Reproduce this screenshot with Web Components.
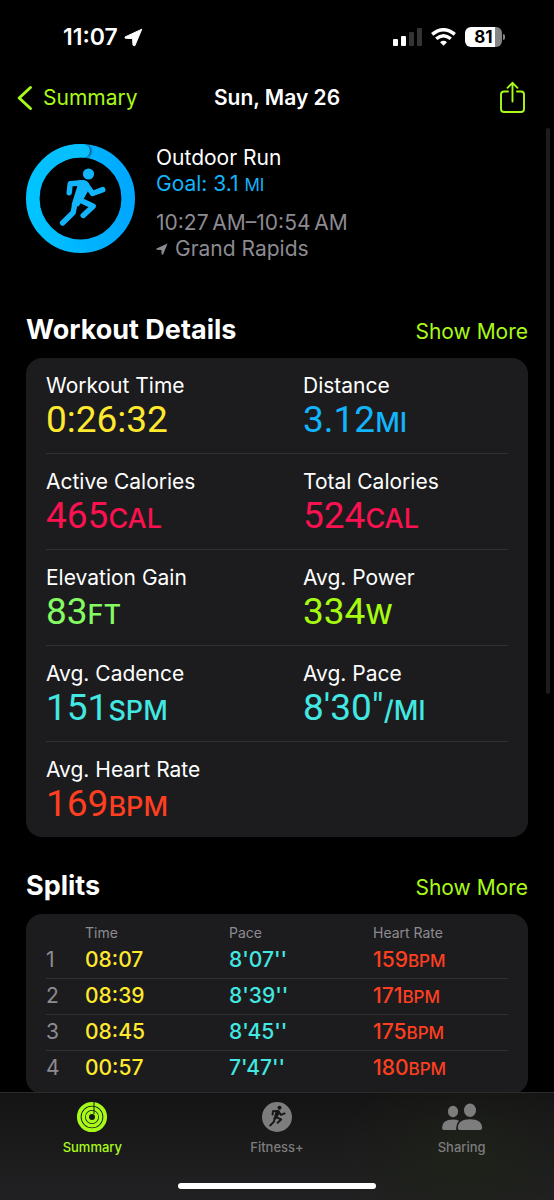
<!DOCTYPE html>
<html lang="en">
<head>
<meta charset="utf-8">
<meta name="viewport" content="width=device-width, initial-scale=1">
<title>Workout</title>
<style>
  :root {
    --accent: #a8fa18;
    --muted: #8c8b91;
    --card: #1c1c1e;
    --line: #303032;
    --blue: #12b4fb;
    --yellow: #ffe92e;
    --pink: #fa1150;
    --green: #84fb62;
    --lime: #a6fb10;
    --teal: #42e8e1;
    --red: #ff3f20;
    --numbers: Roboto, "Liberation Sans", sans-serif;
    --text: Inter, "Liberation Sans", sans-serif;
  }
  body {
    margin: 0;
    background: #000;
    color: #fff;
    font: 21px/26px var(--text);
  }
  small {
    font-size: 17px;
    line-height: 1;
  }
</style>
</head>
<body>
<workout-app>
  <status-bar slot="top" time="11:07" battery="81"></status-bar>
  <nav-header slot="top" back="Summary">Sun, May 26</nav-header>

  <workout-hero>
    <span slot="title">Outdoor Run</span>
    <span slot="goal">Goal: 3.1 <small>MI</small></span>
    <span slot="time">10:27&#8201;AM–10:54&#8201;AM</span>
    <span slot="place">Grand Rapids</span>
  </workout-hero>

  <detail-section heading="Workout Details">
    <metric-row>
      <metric-item label="Workout Time" value="0:26:32" color="yellow"></metric-item>
      <metric-item label="Distance" value="3.12" unit="MI" color="blue"></metric-item>
    </metric-row>
    <metric-row>
      <metric-item label="Active Calories" value="465" unit="CAL" color="pink"></metric-item>
      <metric-item label="Total Calories" value="524" unit="CAL" color="pink"></metric-item>
    </metric-row>
    <metric-row>
      <metric-item label="Elevation Gain" value="83" unit="FT" color="green"></metric-item>
      <metric-item label="Avg. Power" value="334" unit="W" color="lime"></metric-item>
    </metric-row>
    <metric-row>
      <metric-item label="Avg. Cadence" value="151" unit="SPM" color="teal"></metric-item>
      <metric-item label="Avg. Pace" value="8'30&quot;" unit="/MI" color="teal"></metric-item>
    </metric-row>
    <metric-row>
      <metric-item label="Avg. Heart Rate" value="169" unit="BPM" color="red"></metric-item>
    </metric-row>
  </detail-section>

  <detail-section heading="Splits">
    <splits-table></splits-table>
  </detail-section>

  <tab-bar slot="bottom">
    <tab-item icon="rings" label="Summary" active></tab-item>
    <tab-item icon="fitness" label="Fitness+"></tab-item>
    <tab-item icon="people" label="Sharing"></tab-item>
  </tab-bar>
</workout-app>

<script>
/**
 * Attach an open shadow root filled with the given markup
 * @param {HTMLElement} host
 * @param {string} html
 * @returns {ShadowRoot}
 */
const render = (host, html) => {
  const template = document.createElement('template');
  template.innerHTML = html;
  const root = host.attachShadow({mode: 'open'});
  root.appendChild(template.content.cloneNode(true));
  return root;
};

// Running figure, shared by the goal ring and the Fitness+ tab
const runner = `
  <circle cx="62.5" cy="30" r="5.6"/>
  <path d="M52 36.2H58.5Q61.5 36.5 63 39.5L64 43.5L58.5 53.5L52.5 62.5L45.5 61L51.2 42.5Z"/>
  <g fill="none" stroke="currentColor" stroke-width="5.4" stroke-linecap="round" stroke-linejoin="round">
    <path d="M57 38.8L44.2 39.8L43.2 48.8"/>
    <path d="M60.5 41L66.5 49.5L76.8 45.6"/>
    <path d="M48.8 60L47.2 68.5L36.6 79"/>
    <path d="M56 57L67.2 62.3L57.2 71.5"/>
  </g>`;

/**
 * @class WorkoutApp
 */
class WorkoutApp extends HTMLElement {
  /**
   * @function constructor
   */
  constructor () {
    super();
    render(this, `
      <style>
        :host { display: flex; flex-direction: column; height: 100vh; overflow: hidden; position: relative; }
        main { flex: 1; min-height: 0; overflow: hidden; padding: 0 26px; }
        .scroll {
          position: absolute; top: 128px; bottom: 506px; right: 4px; width: 4px;
          border-radius: 2px; background: #1d1d1e;
        }
      </style>
      <slot name="top"></slot>
      <main><slot></slot></main>
      <slot name="bottom"></slot>
      <div class="scroll"></div>
    `);
  }
}

/**
 * @class StatusBar
 */
class StatusBar extends HTMLElement {
  /**
   * @function connectedCallback
   * @returns {void}
   */
  connectedCallback () {
    render(this, `
      <style>
        :host { display: flex; align-items: center; justify-content: space-between; height: 74px; padding: 0 49px 0 63px; }
        .left, .right { display: flex; align-items: center; }
        .left { gap: 6px; font-size: 23px; font-weight: 600; }
        .right { gap: 9px; }
        .battery { display: flex; align-items: center; gap: 1px; }
        .level {
          width: 37px; border-radius: 6px; text-align: center;
          font-size: 17px; font-weight: 700; line-height: 20px; color: #000;
          background: linear-gradient(to right, #fff 81%, #858585 81%);
        }
        .nub { width: 2px; height: 6px; border-radius: 0 2px 2px 0; background: #858585; }
      </style>
      <div class="left">
        <span>${this.getAttribute('time')}</span>
        <svg width="19" height="19" viewBox="0 0 19 19" fill="#fff" stroke="#fff" stroke-linejoin="round"><path d="M1 9L17.8 1.2L10.8 17.8L9 17.2L8.6 10.6L1.2 10.2Z"/></svg>
      </div>
      <div class="right">
        <svg width="29" height="18" viewBox="0 0 29 18">
          <g fill="#fff"><rect y="11" width="5" height="7" rx="1"/><rect x="8" y="8" width="5" height="10" rx="1"/></g>
          <g fill="#343435"><rect x="16" y="4" width="5" height="14" rx="1"/><rect x="24" width="5" height="18" rx="1"/></g>
        </svg>
        <svg width="25" height="18" viewBox="0 0 25 18" fill="none" stroke="#fff" stroke-width="3.4">
          <path d="M1.2 6.4Q12.5 -3 23.8 6.4"/>
          <path d="M5.2 10.7Q12.5 4.6 19.8 10.7"/>
          <path d="M9 14.2Q12.5 11.4 16 14.2L12.5 17.7Z" fill="#fff" stroke="none"/>
        </svg>
        <div class="battery"><div class="level">${this.getAttribute('battery')}</div><div class="nub"></div></div>
      </div>
    `);
  }
}

/**
 * @class NavHeader
 */
class NavHeader extends HTMLElement {
  /**
   * @function connectedCallback
   * @returns {void}
   */
  connectedCallback () {
    render(this, `
      <style>
        :host { display: grid; grid-template-columns: 1fr auto 1fr; align-items: center; height: 48px; padding: 0 17px; }
        a { display: flex; align-items: center; gap: 10px; color: var(--accent); text-decoration: none; }
        h1 { margin: 0; font-size: 21px; font-weight: 600; }
        button { justify-self: end; display: flex; padding: 0 11px; border: 0; background: none; color: var(--accent); }
      </style>
      <a href="#summary">
        <svg width="16" height="26" viewBox="0 0 16 26" fill="none" stroke="currentColor" stroke-width="3" stroke-linecap="round" stroke-linejoin="round"><path d="M13.5 2.5L2.2 13L13.5 23.5"/></svg>
        ${this.getAttribute('back')}
      </a>
      <h1><slot></slot></h1>
      <button aria-label="Share">
        <svg width="27" height="34" viewBox="0 0 27 34" fill="none" stroke="currentColor" stroke-width="1.9" stroke-linecap="round" stroke-linejoin="round">
          <path d="M9 10.5H5Q2 10.5 2 13.5V28Q2 31 5 31H22Q25 31 25 28V13.5Q25 10.5 22 10.5H18"/>
          <path d="M13.5 20.5V1.8M8.5 6.8L13.5 1.8L18.5 6.8"/>
        </svg>
      </button>
    `);
  }
}

/**
 * @class WorkoutHero
 */
class WorkoutHero extends HTMLElement {
  /**
   * @function constructor
   */
  constructor () {
    super();
    render(this, `
      <style>
        :host { display: flex; gap: 21px; padding-top: 22px; }
        .ring { color: #12b4fb; }
        .info { padding-top: 1px; }
        p { margin: 0; }
        .goal { color: var(--blue); margin-bottom: 13px; }
        .muted { color: var(--muted); }
        .place { display: flex; align-items: center; gap: 7px; }
      </style>
      <svg class="ring" width="109" height="109" viewBox="0 0 109 109">
        <defs>
          <linearGradient id="g" x1="0" x2="1"><stop offset="0" stop-color="#00c4ff"/><stop offset="1" stop-color="#00a8ff"/></linearGradient>
          <filter id="s" x="-50%" y="-50%" width="200%" height="200%"><feGaussianBlur stdDeviation="1.2"/></filter>
          <clipPath id="c"><path clip-rule="evenodd" d="M54.5 0A54.5 54.5 0 0 1 54.5 109A54.5 54.5 0 0 1 54.5 0ZM54.5 13.6A40.9 40.9 0 0 0 54.5 95.4A40.9 40.9 0 0 0 54.5 13.6Z"/></clipPath>
        </defs>
        <circle cx="54.5" cy="54.5" r="47.7" fill="none" stroke="url(#g)" stroke-width="13.6"/>
        <g clip-path="url(#c)">
          <circle cx="58.5" cy="7" r="6.8" fill="#003a66" filter="url(#s)"/>
          <path d="M20.8 20.8A47.7 47.7 0 0 1 57.2 6.9" fill="none" stroke="#06c0fd" stroke-width="13.6" stroke-linecap="round"/>
        </g>
        <g fill="currentColor">${runner}</g>
      </svg>
      <div class="info">
        <p><slot name="title"></slot></p>
        <p class="goal"><slot name="goal"></slot></p>
        <p class="muted"><slot name="time"></slot></p>
        <p class="muted place">
          <svg width="12" height="12" viewBox="0 0 12 12" fill="currentColor"><path d="M0.5 5.6L11.5 0.5L7 11.7L5.6 11.2L5.4 6.9L0.5 6.7Z"/></svg>
          <slot name="place"></slot>
        </p>
      </div>
    `);
  }
}

/**
 * @class DetailSection
 */
class DetailSection extends HTMLElement {
  /**
   * @function connectedCallback
   * @returns {void}
   */
  connectedCallback () {
    render(this, `
      <style>
        :host { display: block; padding-top: 52px; }
        :host(:nth-of-type(n + 2)) { padding-top: 33px; }
        header { display: flex; align-items: baseline; justify-content: space-between; height: 44px; }
        h2 { margin: 0; font-size: 27px; line-height: 32px; font-weight: 700; }
        a { color: var(--accent); text-decoration: none; }
        .card { padding: 0 20px; border-radius: 16px; background: var(--card); }
      </style>
      <header>
        <h2>${this.getAttribute('heading')}</h2>
        <a href="#more">Show More</a>
      </header>
      <div class="card"><slot></slot></div>
    `);
  }
}

/**
 * @class MetricRow
 */
class MetricRow extends HTMLElement {
  /**
   * @function constructor
   */
  constructor () {
    super();
    render(this, `
      <style>
        :host {
          display: grid; grid-template-columns: 1fr 1fr; column-gap: 52px;
          padding: 14px 0 13px; border-bottom: 1px solid var(--line);
        }
        :host(:last-of-type) { border-bottom: 0; }
      </style>
      <slot></slot>
    `);
  }
}

/**
 * @class MetricItem
 */
class MetricItem extends HTMLElement {
  /**
   * @function connectedCallback
   * @returns {void}
   */
  connectedCallback () {
    const unit = this.getAttribute('unit') || '';
    render(this, `
      <style>
        :host { display: block; white-space: nowrap; }
        .label { line-height: 28px; }
        .value { font: 37px/40px var(--numbers); color: var(--${this.getAttribute('color')}); }
        small { font: 500 27px/1 var(--text); }
      </style>
      <div class="label">${this.getAttribute('label')}</div>
      <div class="value">${this.getAttribute('value')}<small>${unit}</small></div>
    `);
  }
}

const splits = [
  ['08:07', "8'07''", 159],
  ['08:39', "8'39''", 171],
  ['08:45', "8'45''", 175],
  ['00:57', "7'47''", 180]
];

/**
 * @class SplitsTable
 */
class SplitsTable extends HTMLElement {
  /**
   * @function constructor
   */
  constructor () {
    super();
    const rows = splits.map(([time, pace, rate], i) => `
      <tr><th scope="row">${i + 1}</th><td class="time">${time}</td><td class="pace">${pace}</td><td class="rate">${rate}<small>BPM</small></td></tr>`
    ).join('');
    render(this, `
      <style>
        :host { display: block; padding: 10px 0 8px; }
        table { width: 100%; table-layout: fixed; border-collapse: collapse; text-align: left; }
        th, td { padding: 0; font-weight: 400; }
        thead th { height: 18px; font-size: 14px; line-height: 18px; color: var(--muted); }
        thead th:first-child { width: 39px; }
        thead th:nth-child(2), thead th:nth-child(3) { width: 144px; }
        tbody tr { height: 36px; }
        tbody tr + tr { border-top: 1px solid var(--line); }
        tbody th { color: var(--muted); }
        td { font-weight: 500; }
        small { font-size: 17px; line-height: 1; }
        .time { color: var(--yellow); }
        .pace { color: var(--teal); }
        .rate { color: var(--red); }
      </style>
      <table>
        <thead><tr><th></th><th scope="col">Time</th><th scope="col">Pace</th><th scope="col">Heart Rate</th></tr></thead>
        <tbody>${rows}</tbody>
      </table>
    `);
  }
}

/**
 * @class TabBar
 */
class TabBar extends HTMLElement {
  /**
   * @function constructor
   */
  constructor () {
    super();
    render(this, `
      <style>
        :host {
          display: block; border-top: 1px solid #2c2c2d;
          background:
            radial-gradient(ellipse 140px 90px at 84% 65%, #1e2119, transparent),
            linear-gradient(#141414, #212123);
        }
        nav { display: grid; grid-template-columns: repeat(3, 1fr); padding-top: 8px; }
        .home { width: 198px; height: 6px; margin: 27px auto 11px; border-radius: 3px; background: #fff; }
      </style>
      <nav><slot></slot></nav>
      <div class="home"></div>
    `);
  }
}

const icons = {
  rings: `
    <svg width="32" height="32" viewBox="0 0 32 32" fill="none" stroke="currentColor">
      <circle cx="16" cy="16" r="13.2" stroke-width="3.7"/>
      <circle cx="16" cy="16" r="8.7" stroke-width="3.5"/>
      <circle cx="16" cy="16" r="4.6" stroke-width="3.2"/>
      <path d="M18 .8V13" stroke="#171717" stroke-width="1"/>
    </svg>`,
  fitness: `
    <svg width="32" height="32" viewBox="0 0 32 32">
      <circle cx="16" cy="16" r="15" fill="currentColor"/>
      <g transform="translate(-4 -4) scale(.36)" fill="#171717" color="#171717">${runner}</g>
    </svg>`,
  people: `
    <svg width="42" height="32" viewBox="0 0 42 32" fill="currentColor">
      <ellipse cx="12" cy="10.5" rx="5.1" ry="5.8"/>
      <path d="M1 27Q1 18.5 12 18.5Q15.5 18.5 18 19.7Q15 22.5 15.2 29H3Q1 29 1 27Z"/>
      <ellipse cx="29" cy="9.2" rx="6" ry="6.8"/>
      <path d="M16.8 27Q17 18.3 29 18.3Q41 18.3 41.2 27Q41.2 29 39 29H19Q16.8 29 16.8 27Z"/>
    </svg>`
};

/**
 * @class TabItem
 */
class TabItem extends HTMLElement {
  /**
   * @function connectedCallback
   * @returns {void}
   */
  connectedCallback () {
    const label = this.getAttribute('label');
    render(this, `
      <style>
        :host { display: block; color: #7d7d7d; }
        :host([active]) { color: var(--accent); }
        a {
          display: flex; flex-direction: column; align-items: center; gap: 5px;
          font-size: 13px; line-height: 18px; font-weight: 500;
          color: inherit; text-decoration: none;
        }
      </style>
      <a href="#${label.toLowerCase()}">${icons[this.getAttribute('icon')]}<span>${label}</span></a>
    `);
  }
}

// Register
customElements.define('workout-app', WorkoutApp);
customElements.define('status-bar', StatusBar);
customElements.define('nav-header', NavHeader);
customElements.define('workout-hero', WorkoutHero);
customElements.define('detail-section', DetailSection);
customElements.define('metric-row', MetricRow);
customElements.define('metric-item', MetricItem);
customElements.define('splits-table', SplitsTable);
customElements.define('tab-bar', TabBar);
customElements.define('tab-item', TabItem);
</script>
</body>
</html>
